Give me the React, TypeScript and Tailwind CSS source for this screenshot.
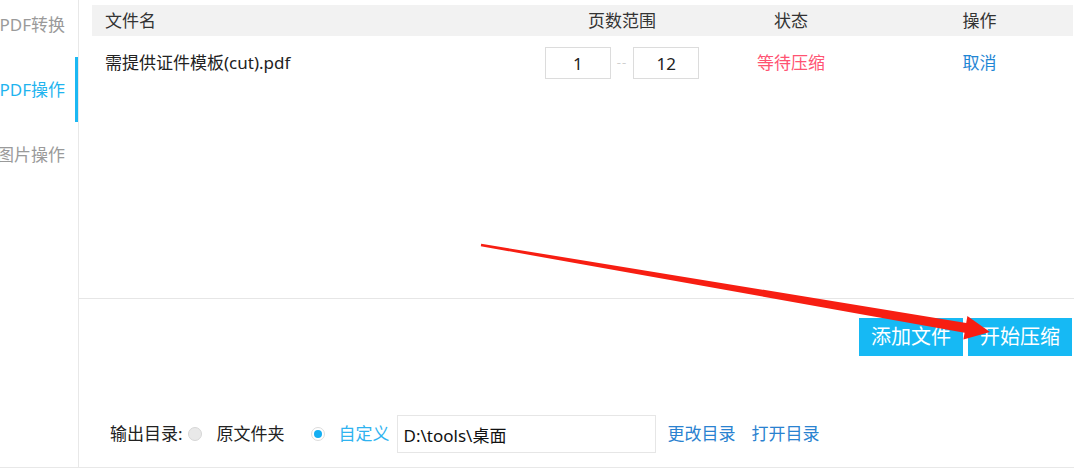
import { useState } from 'react'

const font = { fontFamily: '"Noto Sans", "Noto Sans CJK SC", sans-serif' }

const menu = ['PDF转换', 'PDF操作', '图片操作']

function Radio({ checked }: { checked: boolean }) {
    if (!checked) {
        return <span className="inline-block h-[14px] w-[14px] rounded-full border border-[#d6d6d6] bg-[#e9e9e9]" />
    }
    return (
        <span className="inline-flex h-[14px] w-[14px] items-center justify-center rounded-full border border-[#dcdcdc] bg-white">
            <span className="h-[8px] w-[8px] rounded-full bg-[#14aef2]" />
        </span>
    )
}

export default function App() {
    const [active] = useState(1)
    const [from, setFrom] = useState('1')
    const [to, setTo] = useState('12')
    const [dir, setDir] = useState('D:\\tools\\桌面')

    return (
        <div className="relative flex h-[468px] w-[1074px] overflow-hidden border-b border-[#e8e8e8] bg-white text-[17px]" style={font}>
            <aside className="w-[79px] shrink-0 border-r border-[#e8e8e8]">
                <ul className="-mt-2">
                    {menu.map((m, i) => (
                        <li
                            key={m}
                            className={
                                i === active
                                    ? 'flex h-[65px] items-center justify-end whitespace-nowrap border-r-[3px] border-[#1cb8f3] pr-[10px] text-[#1fb4ef]'
                                    : 'flex h-[65px] items-center justify-end whitespace-nowrap border-r-[3px] border-transparent pr-[10px] text-[#9a9a9a]'
                            }
                        >
                            {m}
                        </li>
                    ))}
                </ul>
            </aside>

            <main className="flex flex-1 flex-col">
                <div className="h-[299px] shrink-0 border-b border-[#e6e6e6] pl-[13px] pr-[1px] pt-[5px]">
                    <div className="flex h-[31px] items-center bg-[#f2f2f2] text-[#333]">
                        <div className="w-[448px] pl-[13px]">文件名</div>
                        <div className="w-[164px] text-center">页数范围</div>
                        <div className="w-[174px] text-center">状态</div>
                        <div className="w-[195px] pl-2 text-center">操作</div>
                    </div>
                    <div className="flex h-[54px] items-center text-[#222]">
                        <div className="w-[448px] pl-[13px]">需提供证件模板(cut).pdf</div>
                        <div className="flex w-[164px] items-center justify-center">
                            <input
                                value={from}
                                onChange={e => setFrom(e.target.value)}
                                className="h-[32px] w-[66px] border border-[#dcdcdc] text-center text-[#222] outline-none"
                            />
                            <span className="mx-[6px] text-[13px] tracking-[1px] text-[#cfcfcf]">--</span>
                            <input
                                value={to}
                                onChange={e => setTo(e.target.value)}
                                className="h-[32px] w-[66px] border border-[#dcdcdc] text-center text-[#222] outline-none"
                            />
                        </div>
                        <div className="w-[174px] text-center text-[#ff5372]">等待压缩</div>
                        <div className="w-[195px] pl-2 text-center text-[#1f86d4]">取消</div>
                    </div>
                </div>

                <div className="flex justify-end gap-[5px] pr-[2px] pt-[19px]">
                    <button className="h-[38px] w-[104px] bg-[#16b9f4] text-[20px] text-white">添加文件</button>
                    <button className="h-[38px] w-[104px] bg-[#16b9f4] text-[20px] text-white">开始压缩</button>
                </div>

                <div className="mt-auto flex items-center pb-[14px] pl-[31px] text-[#222]">
                    <span>输出目录:</span>
                    <span className="ml-[5px] flex"><Radio checked={false} /></span>
                    <span className="ml-[15px]">原文件夹</span>
                    <span className="ml-[26px] flex"><Radio checked /></span>
                    <span className="ml-[14px] text-[#2fb3f0]">自定义</span>
                    <input
                        value={dir}
                        onChange={e => setDir(e.target.value)}
                        className="ml-[7px] h-[38px] w-[259px] border border-[#e6e6e6] px-[6px] text-[#111] outline-none"
                    />
                    <span className="ml-[12px] text-[#2a82d0]">更改目录</span>
                    <span className="ml-[16px] text-[#2a82d0]">打开目录</span>
                </div>
            </main>

            <svg className="pointer-events-none absolute inset-0" width="1074" height="468" viewBox="0 0 1074 468">
                <polygon
                    points="481.2,243.8 966.2,322.9 967.4,316 990,332 963.4,339.6 964.6,332.7 480.8,246.2"
                    fill="#f71e12"
                />
            </svg>
        </div>
    )
}
